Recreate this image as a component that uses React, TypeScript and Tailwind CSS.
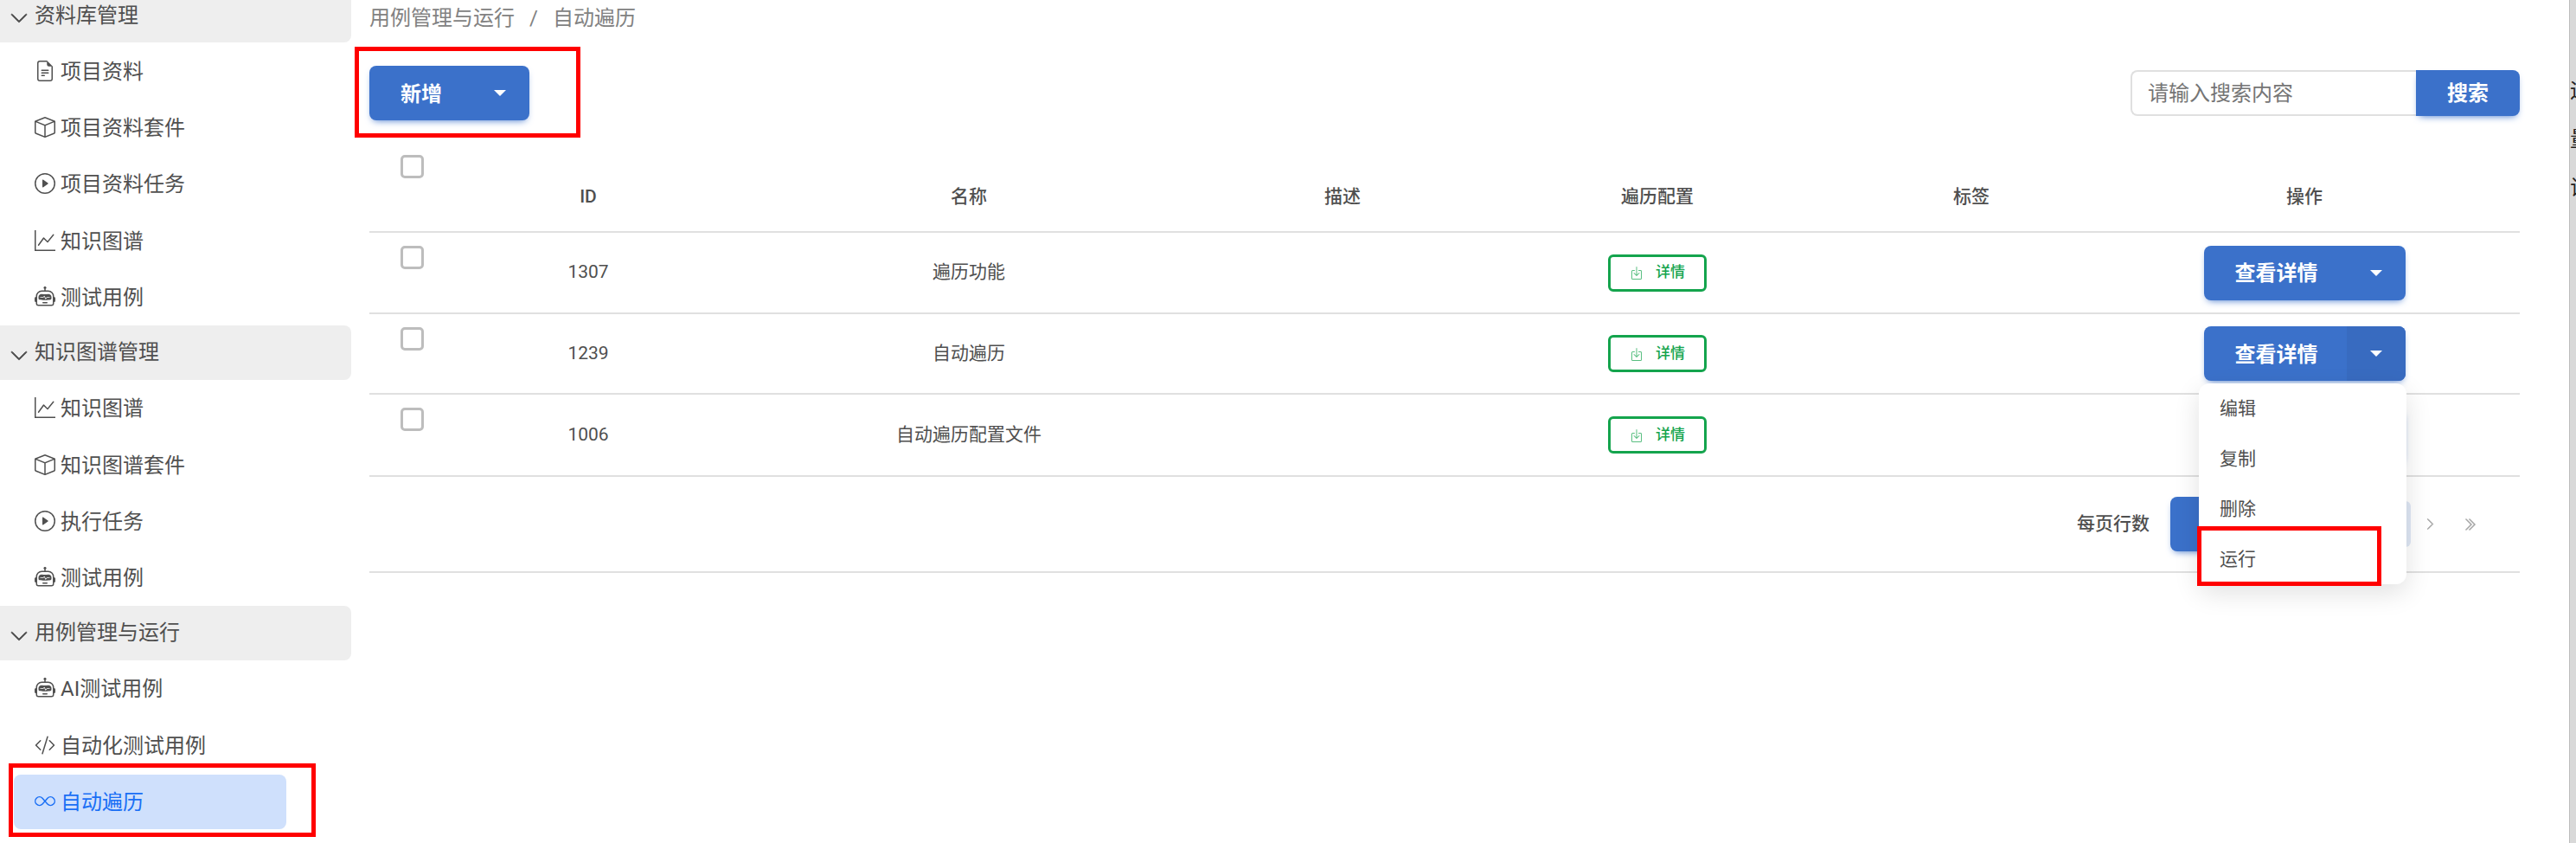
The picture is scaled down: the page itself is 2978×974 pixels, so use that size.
import type { ReactNode } from 'react';
import {
  BsBox,
  BsBoxArrowInDown,
  BsChevronDoubleRight,
  BsChevronDown,
  BsChevronRight,
  BsCodeSlash,
  BsFileEarmarkText,
  BsGraphUp,
  BsInfinity,
  BsPlayCircle,
  BsRobot,
} from 'react-icons/bs';

type NavItem = { label: string; icon: ReactNode; active?: boolean };
type NavGroup = { title: string; items: NavItem[] };

const groups: NavGroup[] = [
  {
    title: '资料库管理',
    items: [
      { label: '项目资料', icon: <BsFileEarmarkText size={24} /> },
      { label: '项目资料套件', icon: <BsBox size={24} /> },
      { label: '项目资料任务', icon: <BsPlayCircle size={24} /> },
      { label: '知识图谱', icon: <BsGraphUp size={24} /> },
      { label: '测试用例', icon: <BsRobot size={24} /> },
    ],
  },
  {
    title: '知识图谱管理',
    items: [
      { label: '知识图谱', icon: <BsGraphUp size={24} /> },
      { label: '知识图谱套件', icon: <BsBox size={24} /> },
      { label: '执行任务', icon: <BsPlayCircle size={24} /> },
      { label: '测试用例', icon: <BsRobot size={24} /> },
    ],
  },
  {
    title: '用例管理与运行',
    items: [
      { label: 'AI测试用例', icon: <BsRobot size={24} /> },
      { label: '自动化测试用例', icon: <BsCodeSlash size={24} /> },
      { label: '自动遍历', icon: <BsInfinity size={24} />, active: true },
    ],
  },
];

const rows = [
  { id: '1307', name: '遍历功能', height: 'h-[94px]', dark: false },
  { id: '1239', name: '自动遍历', height: 'h-[93px]', dark: true },
  { id: '1006', name: '自动遍历配置文件', height: 'h-[95px]', dark: false },
];

const Caret = () => (
  <span className="block w-0 h-0 border-x-[7px] border-x-transparent border-t-[7px] border-t-white" />
);

const SplitButton = ({ label, dark = false }: { label: string; dark?: boolean }) => (
  <div className="inline-flex h-[63px] rounded-lg bg-[#3b71ca] text-white text-[24px] font-bold shadow-[0_4px_9px_-4px_#3b71ca] overflow-hidden align-middle">
    <span className="flex items-center pl-9 pr-[33px] pt-[2px]">{label}</span>
    <span className={`flex items-center justify-center w-[68px] ${dark ? 'bg-[#386bc0]' : ''}`}>
      <Caret />
    </span>
  </div>
);

const Sidebar = () => (
  <aside className="w-[406px] shrink-0 -mt-[14px]">
    {groups.map((group) => (
      <div key={group.title}>
        <div className="flex h-[63px] items-center gap-[7px] pl-[11px] rounded-r-lg bg-[#eeeeee] text-[24px] text-[#505050]">
          <BsChevronDown size={22} stroke="currentColor" strokeWidth={0.7} className="mt-[7px]" />
          <span>{group.title}</span>
        </div>
        <div className="flex flex-col">
          {group.items.map((item) => (
            <div
              key={item.label}
              className={`flex h-[63px] my-[1.16px] ml-4 w-[315px] items-center gap-[6px] pl-6 rounded-lg text-[24px] ${
                item.active ? 'bg-[#cfe0fc] text-[#1a6ff5]' : 'text-[#505050]'
              }`}
            >
              {item.icon}
              <span className="pt-[2px]">{item.label}</span>
            </div>
          ))}
        </div>
      </div>
    ))}
  </aside>
);

const Toolbar = () => (
  <div className="flex items-center justify-between mt-9">
    <SplitButton label="新增" />
    <div className="flex h-[53px]">
      <input
        placeholder="请输入搜索内容"
        className="w-[330px] px-[18px] border-2 border-r-0 border-[#e0e0e0] rounded-l-lg text-[24px] placeholder:text-[#757575] outline-none"
      />
      <button className="w-[120px] rounded-r-lg bg-[#3b71ca] text-white text-[24px] font-bold shadow-[0_4px_9px_-4px_#3b71ca]">
        搜索
      </button>
    </div>
  </div>
);

const Table = () => (
  <table className="w-full table-fixed border-collapse mt-[23px] text-[21px] text-[#4f4f4f]">
    <colgroup>
      <col className="w-[108px]" />
      <col className="w-[290px]" />
      <col className="w-[590px]" />
      <col className="w-[274px]" />
      <col className="w-[454px]" />
      <col className="w-[272px]" />
      <col className="w-[498px]" />
    </colgroup>
    <thead>
      <tr className="h-[106px] border-b-2 border-[#e0e0e0]">
        <th className="align-top pt-[17px] pl-9">
          <input type="checkbox" className="block appearance-none w-[27px] h-[27px] border-[3px] border-[#bdbdbd] rounded-[5px]" />
        </th>
        {['ID', '名称', '描述', '遍历配置', '标签', '操作'].map((title) => (
          <th key={title} className="align-bottom pb-[26px] font-medium leading-7">
            {title}
          </th>
        ))}
      </tr>
    </thead>
    <tbody>
      {rows.map((row) => (
        <tr key={row.id} className={`${row.height} border-b-2 border-[#e0e0e0]`}>
          <td className="align-top pt-[15px] pl-9">
            <input type="checkbox" className="block appearance-none w-[27px] h-[27px] border-[3px] border-[#bdbdbd] rounded-[5px]" />
          </td>
          <td className="text-center">{row.id}</td>
          <td className="text-center">{row.name}</td>
          <td />
          <td className="text-center">
            <span className="inline-flex w-[114px] h-[43px] items-center justify-center gap-[14px] border-[3px] border-[#14a44d] rounded-md text-[#14a44d] text-[17px] font-medium align-middle">
              <BsBoxArrowInDown size={16} className="opacity-70" />
              详情
            </span>
          </td>
          <td />
          <td className="text-center">
            <SplitButton label="查看详情" dark={row.dark} />
          </td>
        </tr>
      ))}
    </tbody>
  </table>
);

const Pagination = () => (
  <div className="flex h-[111px] items-center justify-end pr-[50px] border-b-2 border-[#e0e0e0] text-[21px] text-[#4f4f4f] font-medium">
    <span>每页行数</span>
    <span className="ml-6 w-[141px] h-[63px] rounded-l-lg bg-[#3b71ca] shadow-[0_4px_9px_-4px_#3b71ca]" />
    <span className="w-[137px] h-[53px] bg-[#dfe7f5] rounded-r-md" />
    <BsChevronRight size={15} stroke="currentColor" strokeWidth={0.6} className="ml-[15px] text-[#a0a0a0]" />
    <BsChevronDoubleRight size={16} stroke="currentColor" strokeWidth={0.6} className="ml-[30px] text-[#a0a0a0]" />
  </div>
);

const RowMenu = () => (
  <div className="absolute left-[2542px] top-[443px] w-[240px] rounded-xl bg-white text-[21px] text-[#4f4f4f] shadow-[0_10px_30px_rgba(0,0,0,0.12)]">
    {['编辑', '复制', '删除', '运行'].map((action) => (
      <div key={action} className="flex h-[58px] items-center pl-6 pt-[2px]">
        {action}
      </div>
    ))}
  </div>
);

export default function App() {
  return (
    <div
      className="relative flex w-[2978px] h-[974px] overflow-hidden bg-white"
      style={{ fontFamily: 'Roboto, "Noto Sans CJK SC", sans-serif' }}
    >
      <Sidebar />
      <main className="w-[2486px] ml-[21px] shrink-0">
        <div className="h-10 flex items-center gap-[17px] pt-[2px] text-[24px] text-[#828282]">
          <span>用例管理与运行</span>
          <span>/</span>
          <span>自动遍历</span>
        </div>
        <Toolbar />
        <Table />
        <Pagination />
      </main>

      {/* cut-off neighbour window at the right edge */}
      <div className="ml-[57px] flex-1 overflow-hidden bg-[#d9d9d9] border-l border-[#bcbcbc] text-[24px] leading-7 text-[#222222] pt-[91px]">
        <div>运</div>
        <div className="mt-[28px]">量</div>
        <div className="mt-[28px]">试</div>
      </div>

      <RowMenu />

      {/* red annotation boxes */}
      <div className="absolute left-[410px] top-[54px] w-[261px] h-[105px] border-[5px] border-[#ff0000]" />
      <div className="absolute left-[10px] top-[882px] w-[355px] h-[85px] border-[5px] border-[#ff0000]" />
      <div className="absolute left-[2540px] top-[608px] w-[213px] h-[69px] border-[5px] border-[#ff0000]" />
    </div>
  );
}
